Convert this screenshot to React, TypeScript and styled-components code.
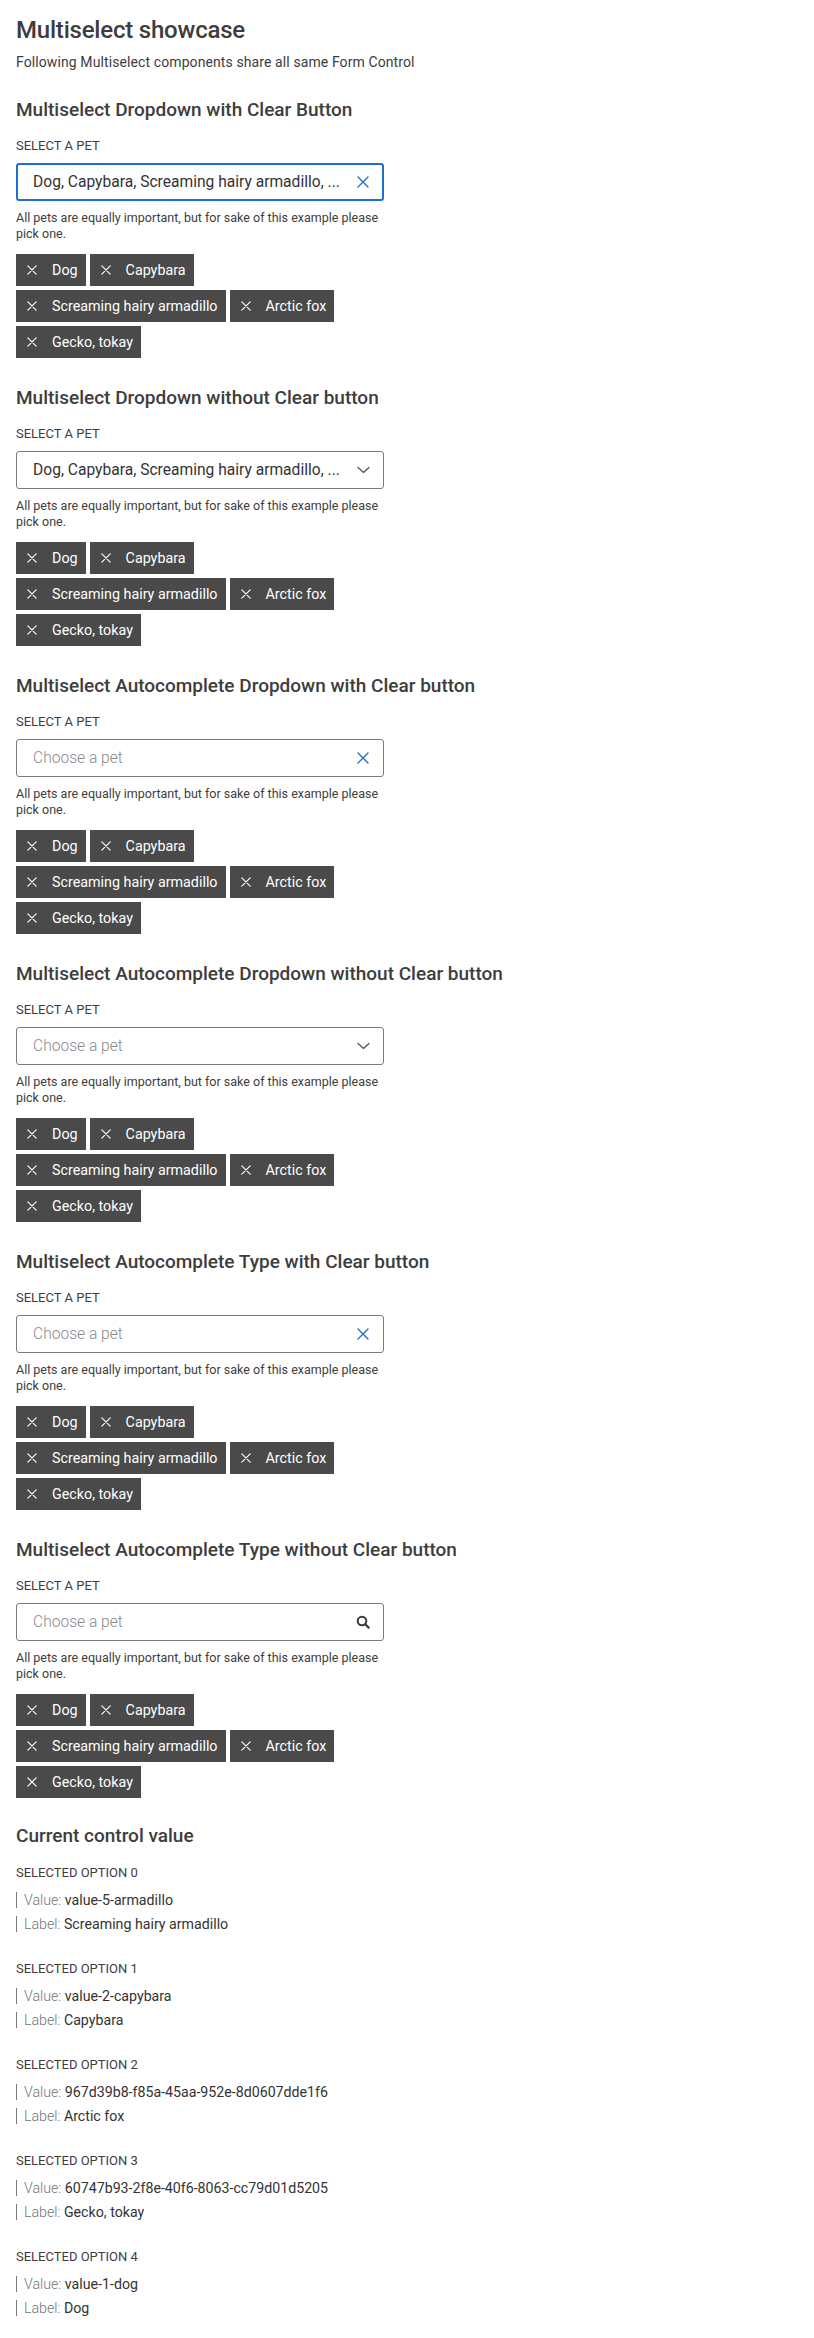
import React from "react";
import styled, { createGlobalStyle } from "styled-components";

const GlobalStyle = createGlobalStyle`
  html, body { margin: 0; padding: 0; background: #ffffff; }
  body {
    font-family: Roboto, "Noto Sans", "Liberation Sans", sans-serif;
    color: #3d3d3d;
    -webkit-font-smoothing: antialiased;
  }
  * { box-sizing: border-box; }
`;

const Page = styled.main`
  display: flex;
  flex-direction: column;
  padding: 16px 16px 16px 16px;
`;

const Title = styled.h1`
  margin: 0;
  font-size: 24px;
  line-height: 28px;
  font-weight: 500;
  letter-spacing: -0.2px;
  color: #3d3d3d;
`;

const Subtitle = styled.p`
  margin: 8px 0 0;
  font-size: 14px;
  line-height: 20px;
  letter-spacing: 0.1px;
  color: #3d3d3d;
`;

const Sections = styled.div`
  display: flex;
  flex-direction: column;
  gap: 28px;
  margin-top: 26px;
`;

const Section = styled.section`
  display: flex;
  flex-direction: column;
  width: 368px;
`;

const SectionTitle = styled.h2`
  margin: 0;
  font-size: 19px;
  line-height: 24px;
  font-weight: 500;
  letter-spacing: 0px;
  color: #3d3d3d;
  white-space: nowrap;
`;

const FieldLabel = styled.div`
  margin-top: 14px;
  font-size: 13px;
  line-height: 20px;
  text-transform: uppercase;
  color: #3d3d3d;
`;

const InputBox = styled.div<{ $focused?: boolean }>`
  margin-top: 7px;
  height: 38px;
  display: flex;
  align-items: center;
  gap: 10px;
  border: ${(p) => (p.$focused ? "2px solid #1f6fd1" : "1px solid #7a7a7a")};
  border-radius: 3px;
  padding: 0 ${(p) => (p.$focused ? "12px" : "13px")} 0 ${(p) => (p.$focused ? "15px" : "16px")};
  background: #fff;
`;

const InputText = styled.span<{ $placeholder?: boolean }>`
  flex: 1;
  min-width: 0;
  overflow: hidden;
  white-space: nowrap;
  font-size: 15.6px;
  line-height: 20px;
  font-weight: ${(p) => (p.$placeholder ? 300 : 400)};
  color: ${(p) => (p.$placeholder ? "#8a8a8a" : "#333333")};
`;

const IconSlot = styled.span<{ $color: string }>`
  display: flex;
  align-items: center;
  justify-content: center;
  width: 14px;
  height: 14px;
  color: ${(p) => p.$color};
  flex: none;
`;

const Helper = styled.p`
  margin: 9px 0 0;
  font-size: 12.5px;
  line-height: 16px;
  color: #3d3d3d;
`;

const ChipList = styled.div`
  margin-top: 12px;
  display: flex;
  flex-wrap: wrap;
  gap: 4px;
`;

const Chip = styled.button`
  display: inline-flex;
  align-items: center;
  height: 32px;
  padding: 0 8px 0 11px;
  gap: 15px;
  border: none;
  border-radius: 0;
  background: #4a4a4a;
  color: #ffffff;
  font-family: inherit;
  font-size: 14.3px;
  line-height: 20px;
  cursor: pointer;
`;

const ValuesSection = styled.section`
  display: flex;
  flex-direction: column;
  margin-top: 26px;
`;

const OptionList = styled.div`
  display: flex;
  flex-direction: column;
  gap: 27px;
`;

const OptionBlock = styled.div`
  display: flex;
  flex-direction: column;
`;

const OptionLabel = styled(FieldLabel)<{ $first?: boolean }>`
  margin-top: ${(p) => (p.$first ? "15px" : "0")};
`;

const Lines = styled.div`
  margin-top: 9px;
  display: flex;
  flex-direction: column;
  gap: 8px;
`;

const Line = styled.div`
  border-left: 1px solid #7a7a7a;
  padding-left: 7px;
  font-size: 14.2px;
  line-height: 16px;
  color: #333333;
`;

const Key = styled.span`
  color: #757575;
  font-weight: 300;
`;

const CloseIcon = ({ size = 12 }: { size?: number }) => (
  <svg width={size} height={size} viewBox="0 0 12 12" fill="none">
    <path d="M1 1L11 11M11 1L1 11" stroke="currentColor" strokeWidth="1.4" strokeLinecap="round" />
  </svg>
);

const ChevronIcon = () => (
  <svg width="13" height="8" viewBox="0 0 13 8" fill="none">
    <path d="M1 1.5L6.5 6.5L12 1.5" stroke="currentColor" strokeWidth="1.3" strokeLinecap="round" strokeLinejoin="round" />
  </svg>
);

const SearchIcon = () => (
  <svg width="14" height="14" viewBox="0 0 14 14" fill="none">
    <circle cx="6" cy="6" r="4.3" stroke="currentColor" strokeWidth="2" />
    <path d="M9.3 9.3L12.6 12.6" stroke="currentColor" strokeWidth="2.2" strokeLinecap="round" />
  </svg>
);

type IconKind = "clear" | "chevron" | "search";

const pets = ["Dog", "Capybara", "Screaming hairy armadillo", "Arctic fox", "Gecko, tokay"];
const summary = "Dog, Capybara, Screaming hairy armadillo, ...";

const sections: { title: string; text?: string; icon: IconKind; focused?: boolean }[] = [
  { title: "Multiselect Dropdown with Clear Button", text: summary, icon: "clear", focused: true },
  { title: "Multiselect Dropdown without Clear button", text: summary, icon: "chevron" },
  { title: "Multiselect Autocomplete Dropdown with Clear button", icon: "clear" },
  { title: "Multiselect Autocomplete Dropdown without Clear button", icon: "chevron" },
  { title: "Multiselect Autocomplete Type with Clear button", icon: "clear" },
  { title: "Multiselect Autocomplete Type without Clear button", icon: "search" },
];

const values = [
  { value: "value-5-armadillo", label: "Screaming hairy armadillo" },
  { value: "value-2-capybara", label: "Capybara" },
  { value: "967d39b8-f85a-45aa-952e-8d0607dde1f6", label: "Arctic fox" },
  { value: "60747b93-2f8e-40f6-8063-cc79d01d5205", label: "Gecko, tokay" },
  { value: "value-1-dog", label: "Dog" },
];

const renderIcon = (kind: IconKind) => {
  if (kind === "clear")
    return (
      <IconSlot $color="#1f6fd1">
        <CloseIcon size={12} />
      </IconSlot>
    );
  if (kind === "chevron")
    return (
      <IconSlot $color="#555555">
        <ChevronIcon />
      </IconSlot>
    );
  return (
    <IconSlot $color="#3a3a3a">
      <SearchIcon />
    </IconSlot>
  );
};

export default function App() {
  return (
    <>
      <GlobalStyle />
      <Page>
        <Title>Multiselect showcase</Title>
        <Subtitle>Following Multiselect components share all same Form Control</Subtitle>
        <Sections>
          {sections.map((s) => (
            <Section key={s.title}>
              <SectionTitle>{s.title}</SectionTitle>
              <FieldLabel>Select a pet</FieldLabel>
              <InputBox $focused={s.focused}>
                <InputText $placeholder={!s.text}>{s.text ?? "Choose a pet"}</InputText>
                {renderIcon(s.icon)}
              </InputBox>
              <Helper>All pets are equally important, but for sake of this example please pick one.</Helper>
              <ChipList>
                {pets.map((p) => (
                  <Chip key={p}>
                    <CloseIcon size={10} />
                    {p}
                  </Chip>
                ))}
              </ChipList>
            </Section>
          ))}
        </Sections>
        <ValuesSection>
          <SectionTitle>Current control value</SectionTitle>
          <OptionList>
            {values.map((v, i) => (
              <OptionBlock key={v.value}>
                <OptionLabel $first={i === 0}>Selected option {i}</OptionLabel>
                <Lines>
                  <Line>
                    <Key>Value: </Key>
                    {v.value}
                  </Line>
                  <Line>
                    <Key>Label: </Key>
                    {v.label}
                  </Line>
                </Lines>
              </OptionBlock>
            ))}
          </OptionList>
        </ValuesSection>
      </Page>
    </>
  );
}
